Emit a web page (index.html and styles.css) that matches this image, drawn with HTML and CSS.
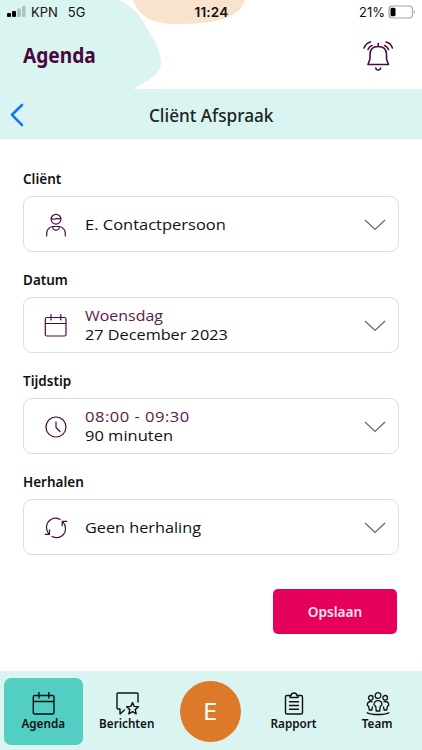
FILE: index.html
```html
<!DOCTYPE html>
<html lang="nl">
<head>
<meta charset="utf-8">
<meta name="viewport" content="width=device-width, initial-scale=1">
<title>Agenda</title>
<link rel="stylesheet" href="styles.css">
</head>
<body>
<div class="app">
  <header class="top">
    <svg class="blobs" width="422" height="89" viewBox="0 0 422 89"><path fill="#daf4f1" d="M0 0H119C132 6 139 14 146 27C153 38 161 50 161 63C161 76 144 82 133 89H0Z"/><path fill="#fae3cd" d="M133 0C138 15 151 24 174 24C204 24 239 22 245 0Z"/></svg>
    <div class="status">
      <div class="carrier">
        <svg width="19" height="12" viewBox="0 0 19 12"><rect x="0" y="7" width="4" height="4" rx="1"/><rect x="5" y="5" width="4" height="6" rx="1"/><g fill="#aec4c2"><rect x="10" y="2.500" width="4" height="8.500" rx="1"/><rect x="15" y="0" width="3.500" height="11" rx="1"/></g></svg>
        <span class="kpn">KPN</span><span class="net">5G</span>
      </div>
      <span class="clock">11:24</span>
      <div class="power"><span>21%</span>
        <svg width="28" height="14" viewBox="0 0 28 14"><rect x="1" y="1" width="23.500" height="12" rx="3.500" fill="#fff" stroke="#a5a5a5" stroke-width="1.200"/><rect x="2.500" y="2.700" width="5" height="8.600" rx="1.500"/><path d="M26 5Q28 7 26 9Z" fill="#a5a5a5"/></svg>
      </div>
    </div>
    <div class="titlebar">
      <h1><span class="sx-title">Agenda</span></h1>
      <svg class="bell" width="30" height="31" viewBox="0 0 30 31"><path d="M5 24.500H25.500L23.500 19V14.500C23.500 9.500 20.500 6.500 15.200 6.500S7 9.500 7 14.500V19ZM15.200 6.500V3.500M12.800 28Q13 30 15.200 30T17.600 28M1 8Q3 3 7.500 2M5 9.500Q6 6.500 9 5.500M29.500 8Q27.500 3 23 2M25.500 9.500Q24.500 6.500 21.500 5.500"/></svg>
    </div>
  </header>
  <div class="subbar">
    <svg class="back" width="14" height="24" viewBox="0 0 14 24"><path d="M12 2L2 11.800L12 22"/></svg>
    <h2><span class="sx-sub">Cliënt Afspraak</span></h2>
  </div>
  <main class="form">
    <section class="group">
      <label><span class="sx-label">Cliënt</span></label>
      <div class="field">
        <svg class="ico" width="24" height="24" viewBox="0 0 24 24"><circle cx="12" cy="6.200" r="4.900"/><path d="M7.200 5.200Q10 7.200 12.500 5.400Q14.500 6.300 16.800 5.300M2.700 23V20.500Q3 14.700 8.500 13.500H15.500Q21 14.700 21.300 20.500V23M8.500 13.500Q9 17.200 12 17.200T15.500 13.500"/></svg>
        <div class="value"><span class="name">E. Contactpersoon</span></div>
        <svg class="chev" width="22" height="12" viewBox="0 0 22 12"><path d="M1 1L11 10.500L21 1"/></svg>
      </div>
    </section>
    <section class="group">
      <label><span class="sx-label">Datum</span></label>
      <div class="field">
        <svg class="ico" width="24" height="24" viewBox="0 0 24 24"><path d="M2.800 3.500H20.500Q22 3.500 22 5V20.500Q22 22 20.500 22H2.800Q1.300 22 1.300 20.500V5Q1.300 3.500 2.800 3.500ZM1.300 9.500H22M7 .5V6M16.800 .5V6"/></svg>
        <div class="value"><span class="day accent">Woensdag</span><span>27 December 2023</span></div>
        <svg class="chev" width="22" height="12" viewBox="0 0 22 12"><path d="M1 1L11 10.500L21 1"/></svg>
      </div>
    </section>
    <section class="group">
      <label><span class="sx-label">Tijdstip</span></label>
      <div class="field">
        <svg class="ico" width="24" height="24" viewBox="0 0 24 24"><circle cx="12" cy="12" r="10"/><path d="M12 7V12.500L16 16.500"/></svg>
        <div class="value"><span class="time accent">08:00 - 09:30</span><span class="duration">90 minuten</span></div>
        <svg class="chev" width="22" height="12" viewBox="0 0 22 12"><path d="M1 1L11 10.500L21 1"/></svg>
      </div>
    </section>
    <section class="group">
      <label><span class="sx-label">Herhalen</span></label>
      <div class="field">
        <svg class="ico" width="24" height="24" viewBox="0 0 24 24"><path d="M16 3.500C9-.2 2.500 5 2.500 11.500Q2.500 15 5 18.300M1.200 18.300H5.500V13.800M8 20.500C15 24 21.500 19 21.500 12.500Q21.500 8.500 18.500 5.300M22.800 5.300H18.200V9.800"/></svg>
        <div class="value"><span>Geen herhaling</span></div>
        <svg class="chev" width="22" height="12" viewBox="0 0 22 12"><path d="M1 1L11 10.500L21 1"/></svg>
      </div>
    </section>
    <button class="save"><span class="sx-save">Opslaan</span></button>
  </main>
  <nav class="tabs">
    <div class="tab active">
      <svg width="24" height="24" viewBox="0 0 24 24"><path d="M2.800 3.500H20.500Q22 3.500 22 5V20.500Q22 22 20.500 22H2.800Q1.300 22 1.300 20.500V5Q1.300 3.500 2.800 3.500ZM1.300 9.500H22M7 .5V6M16.800 .5V6"/></svg>
      <span>Agenda</span>
    </div>
    <div class="tab">
      <svg class="chat" width="24" height="24" viewBox="0 0 24 24"><path d="M22 10V2Q22 1 21 1H2Q1 1 1 2V16Q1 17 2 17H4V22L8.500 18M16.500 10.500L18.200 14.400L22.400 14.800L19.200 17.600L20.200 21.800L16.500 19.600L12.800 21.800L13.800 17.600L10.600 14.800L14.800 14.400Z"/></svg>
      <span>Berichten</span>
    </div>
    <div class="avatar">E</div>
    <div class="tab">
      <svg width="24" height="24" viewBox="0 0 24 24"><path d="M8 3.500H5Q3.500 3.500 3.500 5V20.500Q3.500 22 5 22H19Q20.500 22 20.500 20.500V5Q20.500 3.500 19 3.500H16M8 3.500V5.500H16V3.500H15Q14.500 1 12 1T9 3.500ZM7.500 9.800H16.500M7.500 13.500H16.500M7.500 17.200H16.500"/></svg>
      <span>Rapport</span>
    </div>
    <div class="tab">
      <svg class="team" width="24" height="24" viewBox="0 0 24 24"><circle cx="12" cy="3.600" r="2.900"/><circle cx="4.800" cy="5.800" r="2.300"/><circle cx="19.200" cy="5.800" r="2.300"/><path d="M10.200 19L9.800 14.500L8 12.800Q8 8.600 12 8.600T16 12.800L14.200 14.500L13.800 19ZM6 9.600Q1.500 9 1.200 13L2.700 14.500L3.200 18H5.800L6.500 15M18 9.600Q22.500 9 22.800 13L21.300 14.500L20.800 18H18.200L17.500 15M1.200 20.800Q5 22.500 12 22.500T22.800 20.800"/></svg>
      <span>Team</span>
    </div>
  </nav>
</div>
</body>
</html>
```
FILE: styles.css
```css
* { box-sizing: border-box; }
body { margin: 0; background: #fff; color: #111; font-family: "Open Sans", "Noto Sans", sans-serif; }
svg { display: block; flex: none; }
h1, h2 { margin: 0; }
.app { width: 422px; height: 750px; display: flex; flex-direction: column; overflow: hidden; }
.top { position: relative; height: 89px; flex: none; }
.blobs { position: absolute; inset: 0; }
.status { position: relative; height: 24px; display: grid; grid-template-columns: 1fr auto 1fr; align-items: center; padding: 0 6px 0 7px; font: 13px/16px Inter, sans-serif; }
.carrier { display: flex; align-items: center; }
.kpn { margin-left: 5px; }
.net { margin-left: 10px; }
.clock { font-weight: 600; font-size: 13.5px; letter-spacing: .2px; }
.power { display: flex; align-items: center; justify-content: flex-end; gap: 3px; }
.titlebar { position: relative; height: 65px; display: flex; align-items: center; justify-content: space-between; padding: 0 29px 2px 23px; }
h1, h2, label, .save, .tab { font-family: "Noto Sans", sans-serif; }
h1 { font-size: 22px; line-height: 30px; font-weight: 700; color: #47093c; padding-bottom: 3px; }
.bell, .ico { fill: none; stroke: #4d0b3d; stroke-width: 1.6; stroke-linecap: round; stroke-linejoin: round; }
.ico { stroke-width: 1.2; }
h1 span, h2 span, label span, .save span, .tab span, .value span { display: inline-block; white-space: nowrap; }
.sx-title { transform: scaleX(.87); transform-origin: left; }
.subbar { height: 50px; flex: none; background: #daf4f1; display: grid; grid-template-columns: 40px 1fr 40px; align-items: center; padding-top: 1px; }
.back { margin-left: 10px; fill: none; stroke: #1677ee; stroke-width: 2.6; stroke-linecap: round; stroke-linejoin: round; }
h2 { font-size: 18px; line-height: 26px; font-weight: 500; text-align: center; color: #1c2526; }
.sx-sub { transform: scaleX(.955); }
.form { flex: 1; padding: 29px 23px 0; display: flex; flex-direction: column; }
.group { height: 101px; flex: none; }
label { display: block; height: 28px; font-size: 15px; line-height: 20px; font-weight: 600; }
.sx-label { transform: scaleX(.9); transform-origin: left; }
.field { height: 56px; border: 1px solid #ddd; border-radius: 9px; display: flex; align-items: center; padding: 0 12px 0 20px; }
.value { flex: 1; display: flex; flex-direction: column; align-items: flex-start; margin-left: 16.500px; font-size: 15.2px; line-height: 19px; }
.value span { transform: scaleX(1.07); transform-origin: left; }
.value .name { transform: scaleX(1.085); }
.value .day { transform: scaleX(1.05); }
.value .time { transform: scaleX(1.09); letter-spacing: .45px; }
.value .duration { transform: scaleX(1.085); }
.accent { color: #5a2149; }
.ico, .chev { margin-top: 1px; }
.chev { fill: none; stroke: #666; stroke-width: 1.2; }
.save { align-self: flex-end; width: 124px; height: 45px; margin: 17px 2px 0 0; padding: 0 0 2px; border: 0; border-radius: 5px; background: #e5005b; color: #fce6ef; font-size: 15px; font-weight: 600; }
.sx-save { transform: scaleX(.91); }
.tabs { height: 79px; flex: none; background: #daf4f1; display: grid; grid-template-columns: repeat(5, 83.400px); justify-items: center; align-items: center; padding: 1px 0 0 2px; }
.tab { width: 79px; height: 67px; border-radius: 7px; display: flex; flex-direction: column; align-items: center; padding-top: 14px; font-size: 13px; line-height: 16px; font-weight: 600; }
.tab span { margin-top: -1px; transform: scaleX(.9); }
.tab svg { fill: none; stroke: #111; stroke-width: 1.4; stroke-linecap: round; stroke-linejoin: round; }
.tab .chat { margin-left: 2px; }
.tab .team { margin-left: 2px; stroke-width: 1.3; }
.active { background: #52cec3; }
.avatar { width: 61px; height: 61px; border-radius: 50%; background: #dd7a29; color: #fff; font: 23px/62px Inter, sans-serif; text-align: center; }
```
